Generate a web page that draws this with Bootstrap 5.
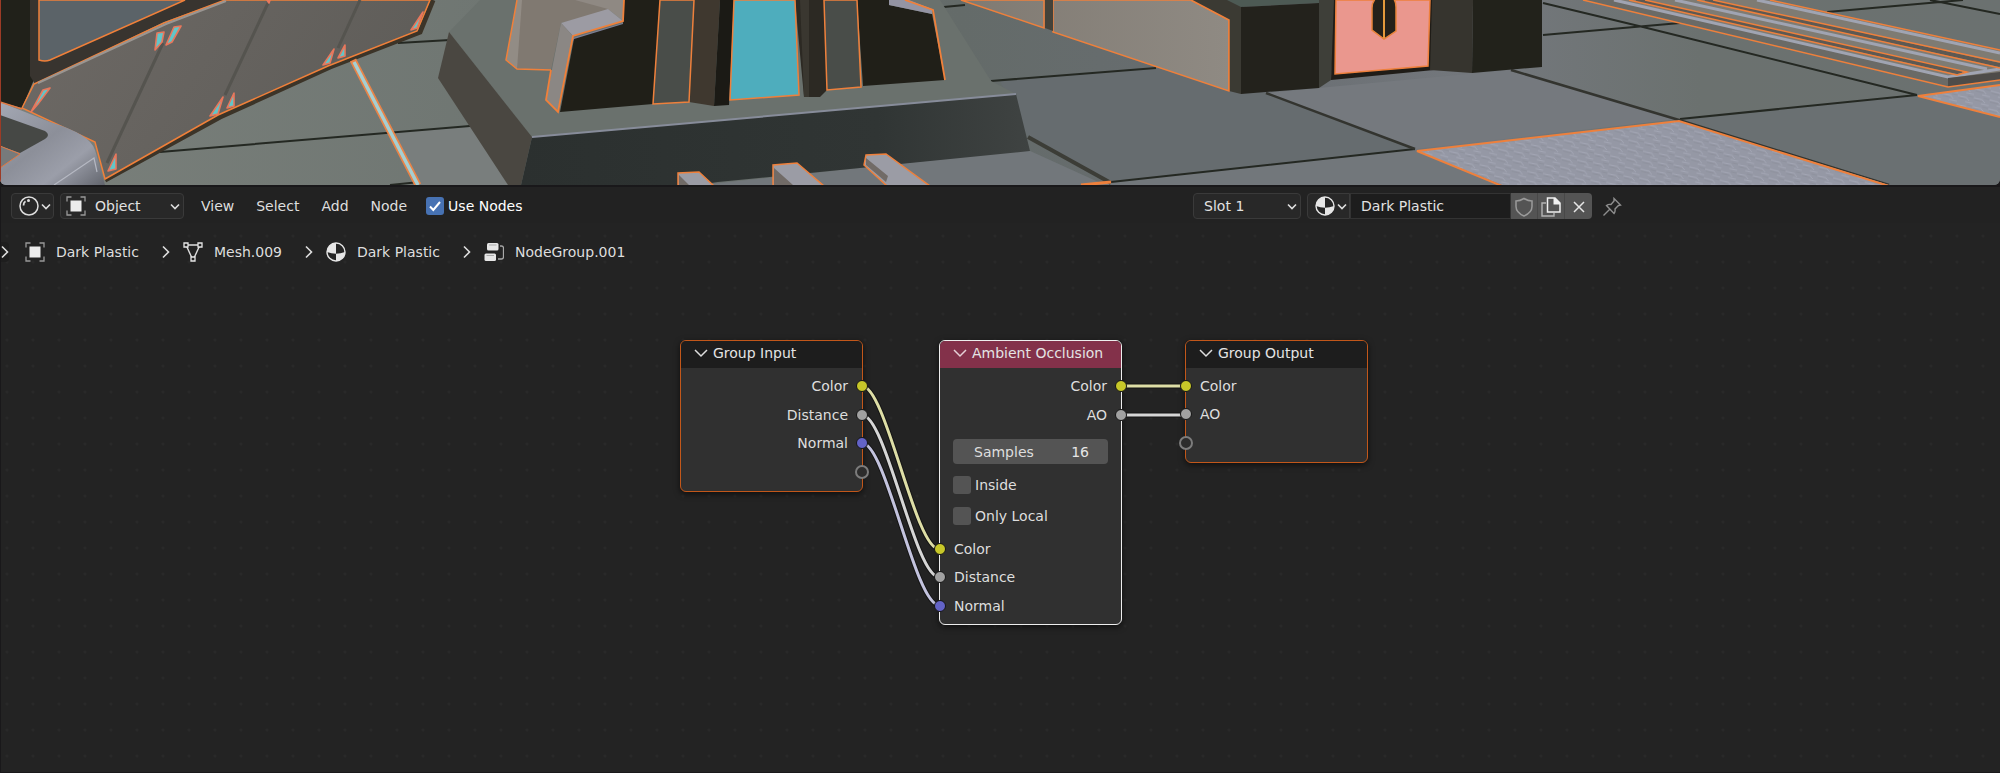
<!DOCTYPE html>
<html lang="en">
<head>
<meta charset="utf-8">
<meta name="viewport" content="width=device-width, initial-scale=1">
<title>Shader Editor</title>
<link rel="stylesheet" href="https://cdn.jsdelivr.net/npm/bootstrap@5.3.0/dist/css/bootstrap.min.css">
<style>
  body { background: #19181a; color: #dedede; font: 14px/20px "DejaVu Sans", sans-serif; }
  .icon { width: 20px; height: 20px; flex: none; }
  .viewport3d { height: 185px; border-radius: 0 0 6px 6px; overflow: hidden; }
  .viewport3d svg { width: 100%; height: 100%; }
  .editor { margin: 2px 0 1px 1px; }
  .bar { background: #222; padding: 6px 0 4px 10px; }
  .ctl { height: 26px; background: #282828; border: 1px solid #3a3a3a; border-radius: 4px; color: #e2e2e2; padding: 0 0 0 3px; }
  select.ctl { appearance: none; width: 100%; }
  .pick-object { width: 124px; margin: 0 6px; }
  .pick-object select { padding-left: 34px; }
  .pick-slot { width: 108px; }
  .pick-slot select { padding-left: 10px; }
  .over { position: absolute; top: 3px; pointer-events: none; }
  .over-start { left: 6px; }
  .over-end { right: 2px; }
  .chev { width: 14px; height: 20px; flex: none; }
  .menu-btn { background: none; border: 0; color: #dedede; padding: 0 11px; }
  .tick { appearance: none; width: 18px; height: 18px; margin: 0; border-radius: 3px; background: #545454; }
  .tick-on:checked { background: #4772b3 url("data:image/svg+xml,%3Csvg xmlns='http://www.w3.org/2000/svg' viewBox='0 0 18 18'%3E%3Cpath d='M4 9.5l3.3 3.5L14 5' fill='none' stroke='white' stroke-width='2'/%3E%3C/svg%3E"); }
  .right-tools { margin-right: 19%; gap: 6px; }
  .mat-name { width: 161px; height: 26px; background: #1d1d1d; border: 1px solid #333; color: #e2e2e2; padding: 0 10px; border-radius: 0; }
  .mat-btn { width: 27px; height: 26px; background: #545454; border: 0; border-right: 1px solid #484848; padding: 0; }
  .mat-btn:last-child { border-right: 0; border-radius: 0 4px 4px 0; }
  .pin { background: none; border: 0; padding: 0; margin-left: 4px; height: 26px; }
  .canvas { background: #232323 radial-gradient(circle, #292929 1px, transparent 2px) -7px 0 / 26px 26px; }
  .crumbs { height: 58px; }
  .crumbs ol { gap: 13px; padding-left: 16px; }
  .crumbs a { gap: 11px; color: #dedede; margin-right: 10px; }
  .side-tab { width: 8px; height: 20px; background: #1e1e1e; border: 0; padding: 0; border-radius: 0 4px 4px 0; }
  .wires { position: absolute; left: 0; top: 0; width: 100%; height: 100%; }
  .node { position: absolute; top: 117px; width: 183px; background: #303030; border: 1px solid #c2571a; border-radius: 6px; box-shadow: 0 2px 6px #0009; }
  .node-active { border-color: #ededed; }
  .node-in { left: 679px; height: 152px; }
  .node-ao { left: 938px; height: 285px; }
  .node-out { left: 1184px; height: 123px; }
  .node-head { height: 27px; gap: 5px; padding: 0 0 3px 13px; background: #1d1d1d; border-radius: 5px 5px 0 0; border: 0; color: #e4e4e4; width: 100%; }
  .node-active .node-head { background: #83314a; }
  .socks { display: grid; grid-auto-rows: 1fr; margin: 4px 0 0; padding: 0; list-style: none; }
  .socks li { position: relative; display: flex; align-items: center; padding: 0 14px; }
  .socks-2 { height: 57px; }
  .socks-3 { height: 85px; }
  .socks-4 { height: 114px; }
  .sock-r { justify-content: flex-end; }
  .dot { position: absolute; width: 12px; height: 12px; border-radius: 50%; border: 1px solid #151515; background: #a1a1a1; }
  .sock-r .dot { right: -6px; }
  .sock-l .dot { left: -6px; }
  .dot-y { background: #c7c729; }
  .dot-v { background: #6363c7; }
  .socks .dot-none { width: 14px; height: 14px; border: 2px solid #7c7c7c; background: #2c2c2c; margin: 0 -1px; }
  .fields { margin: 10px 13px; }
  .samples { height: 25px; background: #545454; border-radius: 4px; padding: 0 19px 0 17px; }
  .samples input { width: 48px; background: none; border: 0; color: #e6e6e6; text-align: right; padding: 0; }
  .flag { height: 18px; gap: 4px; }
  .fields-gap { gap: 13px; margin-top: 12px; }
</style>
<script src="https://cdn.jsdelivr.net/npm/bootstrap@5.3.0/dist/js/bootstrap.bundle.min.js"></script>
</head>
<body class="d-flex flex-column min-vh-100">

<svg class="d-none">
  <symbol id="i-chev" viewBox="0 0 14 20"><path d="M3 8.500l4 4 4-4" fill="none" stroke="#dedede" stroke-width="1.600"/></symbol>
  <symbol id="i-chev-r" viewBox="0 0 8 20"><path d="M1 4.500l5.500 5.500L1 15.500" fill="none" stroke="#dedede" stroke-width="1.600"/></symbol>
  <symbol id="i-object" viewBox="0 0 20 20"><path d="M5.500 1H1v4.500M14.500 1H19v4.500M5.500 19H1v-4.500M14.500 19H19v-4.500" fill="none" stroke="#999" stroke-width="1.300"/><path d="M4.500 4.500h11v11h-11z" fill="#ececec"/></symbol>
  <symbol id="i-material" viewBox="0 0 20 20"><circle cx="10" cy="10" r="9" fill="#252525" stroke="#e6e6e6" stroke-width="1.400"/><path d="M10 1C5 1 1 5 1 10q4.500 1.800 9 1.800zM10 11.800q4.500 0 9-1.800c0 5-4 9-9 9z" fill="#e6e6e6"/></symbol>
  <symbol id="i-mesh" viewBox="0 0 20 20"><path d="M3 3h14M3 3l6 13M17 3l-6 13" fill="none" stroke="#dedede" stroke-width="1.400"/><g fill="#232323" stroke="#e6e6e6" stroke-width="1.300"><path d="M1 1h4v4H1zM15 1h4v4h-4zM8 15h4v4H8z"/></g></symbol>
  <symbol id="i-group" viewBox="0 0 20 20"><rect x="3" y="1" width="11.500" height="7.500" rx="1.500" fill="#e6e6e6"/><rect x="0.500" y="11.500" width="11.500" height="7.500" rx="1.500" fill="#e6e6e6"/><path d="M5 3h7.500M2.500 13.500H10" stroke="#aaa"/><path d="M16 4h1.500q2 0 2 2v9q0 2-2 2H14" fill="none" stroke="#a8a8a8" stroke-width="1.300"/></symbol>
</svg>

<main class="viewport3d" aria-label="3D viewport">
<svg viewBox="0 0 2000 185" preserveAspectRatio="xMinYMin slice" role="img" aria-label="Rendered scene">
  <defs>
    <linearGradient id="floor"><stop offset="0" stop-color="#7a807b"/><stop offset=".25" stop-color="#6f7672"/><stop offset=".48" stop-color="#646b69"/><stop offset=".62" stop-color="#686d71"/><stop offset=".74" stop-color="#74787d"/><stop offset=".85" stop-color="#6b716f"/><stop offset="1" stop-color="#6b7170"/></linearGradient>
    <linearGradient id="front"><stop offset="0" stop-color="#2b302f"/><stop offset=".7" stop-color="#303534"/><stop offset="1" stop-color="#3f4342"/></linearGradient>
    <linearGradient id="sofa" x2="1" y2="1"><stop offset="0" stop-color="#a4a8b4"/><stop offset=".45" stop-color="#8c8f99"/><stop offset=".7" stop-color="#9b9ea9"/><stop offset="1" stop-color="#62656d"/></linearGradient>
    <linearGradient id="wall" x2="1" y2=".3"><stop offset="0" stop-color="#6d6965"/><stop offset="1" stop-color="#5f5d59"/></linearGradient>
    <linearGradient id="beige"><stop offset="0" stop-color="#807a72"/><stop offset="1" stop-color="#8f8a83"/></linearGradient>
    <pattern id="scales" width="16" height="9" patternUnits="userSpaceOnUse" patternTransform="rotate(8)"><rect width="16" height="9" fill="#9598a5"/><path d="M0 2l9 1 3 3M8 7l8 1" fill="none" stroke="#a3a6b4"/><path d="M1 4l8 1M10 1l6 1" stroke="#8b8e99" stroke-width=".7"/></pattern>
  </defs>
  <rect width="2000" height="185" fill="url(#floor)"/>
  <path d="M1028 137L1111 182 1415 149 1266 93 1156 68 1000 81z" fill="#666c6f"/>
  <path d="M1266 93L1415 149 1679 119 1511 70z" fill="#75797e"/>
  <path d="M1111 182L1415 149 1502 185H1100zM1028 150L1105 185H700z" fill="#72777b"/>
  <path d="M1680 120L1917 95 2000 118V185H1889z" fill="#6a7072"/>
  <path d="M470 126L508 185H418L395 132z" fill="#797e7d"/>

  <!-- floor joints -->
  <g fill="none" stroke="#242822" stroke-width="2">
    <path d="M160 152L470 126M398 43l52-3M390 185l30-3M933 8l32-3M991 81l165-13M1543 3l100 24 274 68M1543 35l137-12M1680 119l237-24M1827 12L1963 0M1930 0l70 14M1111 182l304-33"/>
    <path d="M1511 70l168 50 210 65M1266 93l149 56" stroke="#33342f" stroke-width="2.500"/>
    <path d="M1028 137l83 46" stroke="#3c3d37" stroke-width="4"/>
  </g>

  <!-- left building -->
  <path d="M0 0H36V75L22 108 0 102z" fill="#21211a"/>
  <path d="M30 0h185l10 0-61 22-129 62L30 76z" fill="#38342f"/>
  <path d="M39 0V60q6 2 11 0L185 0z" fill="#5b6368" stroke="#f0803a" stroke-width="1.500"/>
  <path d="M433 0l-13 32-90 35-110 50-115 63" fill="none" stroke="#3c3428" stroke-width="5"/>
  <path d="M22 108L34 84 164 23 225 0H430l-13 31-89 35-110 49-113 64-10-37z" fill="url(#wall)" stroke="#f0803a" stroke-width="1.500"/>
  <path d="M38 83L166 24 226 1" stroke="#9a9591" stroke-width="2" fill="none"/>
  <path d="M163 43l-56 120M268 3l-43 92M360 0l-22 48" stroke="#55544f" stroke-width="3"/>
  <g fill="#61c6c9" stroke="#e8775c" stroke-width="1.600" stroke-linejoin="round">
    <path d="M50 88l-7 2-12 22 7-8zM164 32l-7 1-2 17 7-8zM181 26l-7 1-8 18 6-3zM223 97l-13 19 8-2zM234 93l-7 15 7-2zM334 49l-11 16 7-2zM345 45l-7 13 7-2zM116 154l-8 17 8-2zM423 12l-12 18 6-2zM267 0l3 0-1 3z"/>
  </g>
  <path d="M0 102L50 122Q90 134 95 150L105 185H0z" fill="url(#sofa)"/>
  <path d="M0 102l22 7" stroke="#e27a42" stroke-width="1.500"/>
  <path d="M0 115L45 131q6 4 0 8L20 153 0 146z" fill="#464845"/>
  <path d="M0 146l20 8-20 14z" fill="#777a7b" stroke="#e27a42"/>
  <path d="M54 185l40-27 3 14" fill="none" stroke="#b5b8c2" stroke-width="1.200"/>
  <path d="M353 60l65 125" stroke="#e98448" stroke-width="7"/>
  <path d="M354 62l64 123" stroke="#a5cfd2" stroke-width="3.500"/>

  <!-- plinth and tower -->
  <path d="M449 32L480 0H940L991 81 1016 94 532 137z" fill="#6a716d"/>
  <path d="M449 32L438 78 508 185h13l11-48z" fill="#4a4741"/>
  <path d="M532 137L1016 94l14 57-312 31-20 3H521z" fill="url(#front)"/>
  <path d="M532 137L1016 94" stroke="#878c9a" stroke-width="2"/>
  <path d="M517 0L506 60l11 9 34 1 10-47 60-15V0z" fill="#807971"/>
  <path d="M517 0L506 60l11 9 5-69z" fill="#928c85"/>
  <path d="M575 0h49l-1 21-15-12z" fill="#8f8983"/>
  <path d="M517 0L506 60l11 9 34 1" fill="none" stroke="#f0803a" stroke-width="1.500"/>
  <path d="M561 23l47-14 15 12-50 15z" fill="#9c9ba3"/>
  <path d="M573 38l50-15v4l-50 14z" fill="#7b7e96"/>
  <path d="M624 0h36l-7 104-93 8 14-73 49-15z" fill="#201f18"/>
  <path d="M561 23L546 100l12 12 15-76z" fill="#8b8784"/>
  <path d="M551 70l-5 30 12 12 15-76 50-15 1-21" fill="none" stroke="#f0803a" stroke-width="1.800"/>
  <path d="M694 0h26l-6 106-25-4z" fill="#3f382f"/>
  <path d="M720 0h14l-5 105-15 1z" fill="#1b1a15"/>
  <path d="M795 0h29l3 90-7 7h-16z" fill="#2c2923"/>
  <path d="M800 0h9v97h-5z" fill="#3a3730"/>
  <path d="M857 0h32v5l43 9 13 66-82 6z" fill="#201f18"/>
  <path d="M660 0h34l-5 102-36 2zM824 0h33l4 87-34 3z" fill="#494d49" stroke="#ee803c" stroke-width="1.500"/>
  <path d="M734 0h61l4 95-69 5z" fill="#4eadbd" stroke="#ee803c" stroke-width="1.500"/>
  <path d="M889 0h20l23 9v5l-43-9z" fill="#9494a3"/>
  <path d="M905 0l28 10 12 70" fill="none" stroke="#f0803a" stroke-width="1.800"/>
  <g fill="#9b9ca5" stroke="#ee803c" stroke-width="1.500">
    <path d="M678 186v-13l21-1 15 14zM773 186v-21l24-2 27 23zM887 186l-23-21 2-10 20-1 44 32z"/>
  </g>
  <path d="M679 175l10 10h-10zM774 168l19 17h-19zM866 158l22 18-2 6-20-17z" fill="#716b67"/>

  <!-- right building -->
  <path d="M961 0l83 28V0zM1053 0v32l176 59V20L1191 0z" fill="url(#beige)" stroke="#ee803c" stroke-width="1.500"/>
  <path d="M1045 0h8v31l-8-3z" fill="#44423a"/>
  <path d="M1191 0l38 20v71l12 3 2-94z" fill="#3b3a33"/>
  <path d="M1191 0l38 20v71" fill="none" stroke="#ee803c" stroke-width="1.500"/>
  <path d="M1227 0l14 7 78-4V0z" fill="#4d5a54"/>
  <path d="M1241 7l78-4v85l-78 6z" fill="#23221c"/>
  <path d="M1319 0h17l-5 80-12 8z" fill="#3e3f39"/>
  <path d="M1334 0h100v70l-103 10z" fill="#1f1c17"/>
  <path d="M1336 0h94l-2 66-93 8z" fill="#ea978e" stroke="#ee803c" stroke-width="1.500"/>
  <path d="M1376 -2q-4 4-4 10v22l12 9 12-8V7q0-6-3-9z" fill="#24211a" stroke="#e8843a" stroke-width="1.500"/>
  <path d="M1384 0v38" stroke="#e39a3c" stroke-width="2"/>
  <path d="M1432 0h41l-1 73-42-3z" fill="#36342e"/>
  <path d="M1473 0h69v67l-70 6z" fill="#22221b"/>

  <!-- tread plates and rails -->
  <path d="M1417 151l262-30 210 64h-387zM1918 96l82-11v32z" fill="url(#scales)"/>
  <path d="M1502 186l-85-35 262-30 210 65M2000 85l-82 11 82 21" fill="none" stroke="#ee803c" stroke-width="2"/>
  <path d="M1583 0l365 87 52-7V50L1770 0z" fill="#7e7b73"/>
  <path d="M1583 0l365 87V78L1612 0z" fill="#6a6a66"/>
  <path d="M1636 0l326 73M1705 0l295 65" stroke="#5d5953" stroke-width="4"/>
  <path d="M1614 0l334 77 52-8M1675 0l312 69M1757 0l243 53" fill="none" stroke="#a0a4b2" stroke-width="3"/>
  <path d="M1948 78v9l52-7v-8z" fill="#4e4c49"/>
  <path d="M1583 0l365 87 52-7M1770 0l230 50M1629 0l328 75 10-3L1645 0M1697 0l303 68M1713 0l287 62" fill="none" stroke="#ee803c" stroke-width="1.500"/>
  <path d="M1081 185l30-3" stroke="#ee803c" stroke-width="3"/>
  <path d="M0 0v185" stroke="#9c3b26" stroke-width="2"/>
</svg>
</main>

<section class="editor d-flex flex-column flex-grow-1">
  <header class="bar d-flex align-items-center">
    <button class="ctl d-flex align-items-center" aria-label="Editor type">
      <svg class="icon ms-1" viewBox="0 0 20 20"><circle cx="10" cy="10" r="9" fill="none" stroke="#dedede" stroke-width="1.500"/><path d="M4.500 9.500q0-3 2-4.200" fill="none" stroke="#dedede" stroke-width="1.800"/><circle cx="9.500" cy="4.500" r="1.500" fill="#dedede"/></svg>
      <svg class="chev"><use href="#i-chev"/></svg>
    </button>
    <div class="pick-object position-relative">
      <svg class="icon over over-start"><use href="#i-object"/></svg>
      <select class="ctl" aria-label="Shader type"><option>Object</option><option>World</option></select>
      <svg class="chev over over-end"><use href="#i-chev"/></svg>
    </div>
    <nav class="d-flex" aria-label="Editor menus">
      <button class="menu-btn">View</button><button class="menu-btn">Select</button><button class="menu-btn">Add</button><button class="menu-btn">Node</button>
    </nav>
    <div class="d-flex align-items-center gap-1 ms-2 text-white">
      <input class="tick tick-on" type="checkbox" id="use-nodes" checked>
      <label for="use-nodes">Use Nodes</label>
    </div>
    <div class="right-tools d-flex align-items-center ms-auto">
      <div class="pick-slot position-relative">
        <select class="ctl" aria-label="Material slot"><option>Slot 1</option></select>
        <svg class="chev over over-end"><use href="#i-chev"/></svg>
      </div>
      <div class="d-flex">
        <button class="ctl d-flex align-items-center rounded-end-0" aria-label="Browse material"><svg class="icon ms-1"><use href="#i-material"/></svg><svg class="chev"><use href="#i-chev"/></svg></button>
        <input class="mat-name" type="text" value="Dark Plastic" aria-label="Material name">
        <button class="mat-btn" aria-label="Fake user"><svg class="icon" viewBox="0 0 20 20"><path d="M10 1.500q4 2.500 8 2.500v5.500q0 6-8 9.500-8-3.500-8-9.500V4q4 0 8-2.500z" fill="none" stroke="#9a9a9a" stroke-width="1.500"/></svg></button>
        <button class="mat-btn" aria-label="New material"><svg class="icon" viewBox="0 0 20 20"><path d="M5 6H1v13h12v-3" fill="none" stroke="#b4b4b4" stroke-width="1.400"/><path d="M6.500 1H14l5 5v9H6.500z" fill="none" stroke="#f0f0f0" stroke-width="1.500"/><path d="M12.500 1H14l5 5v1.500h-6.500z" fill="#f0f0f0"/></svg></button>
        <button class="mat-btn" aria-label="Unlink material"><svg class="icon" viewBox="0 0 20 20"><path d="M5 5l10 10M15 5L5 15" stroke="#e6e6e6" stroke-width="1.500"/></svg></button>
      </div>
      <button class="pin" aria-label="Pin"><svg class="icon" viewBox="0 0 20 20"><path d="M12 1.500l6.500 6.500-2 .5-3.500 3.500q.5 2.500-1 4.500L4.500 8.500q2-1.500 4.500-1L12 4zM8 12l-6.500 6.500" fill="none" stroke="#8e8e8e" stroke-width="1.400"/></svg></button>
    </div>
  </header>

  <div class="canvas position-relative flex-grow-1">
    <nav class="crumbs d-flex align-items-center" aria-label="Node path">
      <button class="side-tab d-flex" aria-label="Show toolbar"><svg width="8" height="20"><use href="#i-chev-r"/></svg></button>
      <ol class="d-flex align-items-center list-unstyled mb-0">
        <li><a href="#" class="d-flex align-items-center text-decoration-none"><svg class="icon"><use href="#i-object"/></svg>Dark Plastic</a></li>
        <li aria-hidden="true" class="d-flex"><svg width="8" height="20"><use href="#i-chev-r"/></svg></li>
        <li><a href="#" class="d-flex align-items-center text-decoration-none"><svg class="icon"><use href="#i-mesh"/></svg>Mesh.009</a></li>
        <li aria-hidden="true" class="d-flex"><svg width="8" height="20"><use href="#i-chev-r"/></svg></li>
        <li><a href="#" class="d-flex align-items-center text-decoration-none"><svg class="icon"><use href="#i-material"/></svg>Dark Plastic</a></li>
        <li aria-hidden="true" class="d-flex"><svg width="8" height="20"><use href="#i-chev-r"/></svg></li>
        <li><a href="#" class="d-flex align-items-center text-decoration-none"><svg class="icon"><use href="#i-group"/></svg>NodeGroup.001</a></li>
      </ol>
    </nav>

    <svg class="wires" aria-hidden="true">
      <g fill="none" stroke="#141414" stroke-width="5">
        <path d="M861 220C885 220 914 382 938 382M861 192C885 192 914 354 938 354M861 163C885 163 914 326 938 326M1121 163h64M1121 192h64"/>
      </g>
      <g fill="none" stroke-width="3">
        <path d="M861 220C885 220 914 382 938 382" stroke="#c3c3de"/>
        <path d="M861 192C885 192 914 354 938 354M1121 192h64" stroke="#d6d6d6"/>
        <path d="M861 163C885 163 914 326 938 326M1121 163h64" stroke="#dedea6"/>
      </g>
    </svg>

    <article class="node node-in">
      <button class="node-head d-flex align-items-center"><svg width="14" height="20" viewBox="0 0 14 20"><path d="M1 7l6 6 6-6" fill="none" stroke="#dedede" stroke-width="1.500"/></svg>Group Input</button>
      <ul class="socks socks-4">
        <li class="sock-r">Color<i class="dot dot-y"></i></li>
        <li class="sock-r">Distance<i class="dot"></i></li>
        <li class="sock-r">Normal<i class="dot dot-v"></i></li>
        <li class="sock-r"><i class="dot dot-none"></i></li>
      </ul>
    </article>

    <article class="node node-ao node-active">
      <button class="node-head d-flex align-items-center"><svg width="14" height="20" viewBox="0 0 14 20"><path d="M1 7l6 6 6-6" fill="none" stroke="#e6d0d6" stroke-width="1.500"/></svg>Ambient Occlusion</button>
      <ul class="socks socks-2">
        <li class="sock-r">Color<i class="dot dot-y"></i></li>
        <li class="sock-r">AO<i class="dot"></i></li>
      </ul>
      <div class="fields">
        <div class="samples d-flex align-items-center justify-content-between"><label for="samples" class="ps-1">Samples</label><input id="samples" type="text" value="16"></div>
        <div class="fields-gap d-flex flex-column">
          <div class="flag d-flex align-items-center"><input class="tick" type="checkbox" id="inside"><label for="inside">Inside</label></div>
          <div class="flag d-flex align-items-center"><input class="tick" type="checkbox" id="only-local"><label for="only-local">Only Local</label></div>
        </div>
      </div>
      <ul class="socks socks-3">
        <li class="sock-l">Color<i class="dot dot-y"></i></li>
        <li class="sock-l">Distance<i class="dot"></i></li>
        <li class="sock-l">Normal<i class="dot dot-v"></i></li>
      </ul>
    </article>

    <article class="node node-out">
      <button class="node-head d-flex align-items-center"><svg width="14" height="20" viewBox="0 0 14 20"><path d="M1 7l6 6 6-6" fill="none" stroke="#dedede" stroke-width="1.500"/></svg>Group Output</button>
      <ul class="socks socks-3">
        <li class="sock-l">Color<i class="dot dot-y"></i></li>
        <li class="sock-l">AO<i class="dot"></i></li>
        <li class="sock-l"><i class="dot dot-none"></i></li>
      </ul>
    </article>
  </div>
</section>
</body>
</html>
